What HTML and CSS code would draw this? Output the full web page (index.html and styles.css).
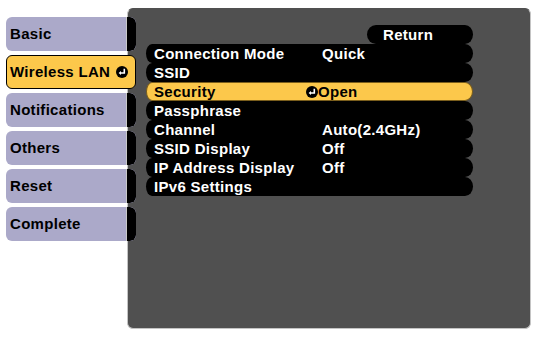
FILE: index.html
```html
<!DOCTYPE html>
<html>
<head>
<meta charset="utf-8">
<link rel="stylesheet" href="styles.css">
</head>
<body>
<div class="screen">
  <div class="sidebar">
    <div class="tab"><span class="tab-label">Basic</span><span class="tab-cap"></span></div>
    <div class="tab tab-active"><span class="tab-label">Wireless LAN</span>
      <svg class="enter-icon" width="12" height="12" viewBox="0 0 12 12"><circle cx="6" cy="6" r="6" fill="#000"/><path d="M8.3 2.8 V7 H4.2" fill="none" stroke="#fff" stroke-width="1.6"/><path d="M2.6 7 L5 5 V9 Z" fill="#fff"/></svg>
    </div>
    <div class="tab"><span class="tab-label">Notifications</span><span class="tab-cap"></span></div>
    <div class="tab"><span class="tab-label">Others</span><span class="tab-cap"></span></div>
    <div class="tab"><span class="tab-label">Reset</span><span class="tab-cap"></span></div>
    <div class="tab"><span class="tab-label">Complete</span><span class="tab-cap"></span></div>
  </div>
  <div class="panel">
    <div class="menu">
      <div class="return-row"><div class="return-btn">Return</div></div>
      <div class="row"><span class="label">Connection Mode</span><span class="value">Quick</span></div>
      <div class="row"><span class="label">SSID</span><span class="value"></span></div>
      <div class="row row-active"><span class="label">Security</span><span class="value value-icon"><svg class="enter-icon" width="12" height="12" viewBox="0 0 12 12"><circle cx="6" cy="6" r="6" fill="#000"/><path d="M8.3 2.8 V7 H4.2" fill="none" stroke="#fff" stroke-width="1.6"/><path d="M2.6 7 L5 5 V9 Z" fill="#fff"/></svg>Open</span></div>
      <div class="row"><span class="label">Passphrase</span><span class="value"></span></div>
      <div class="row"><span class="label">Channel</span><span class="value">Auto(2.4GHz)</span></div>
      <div class="row"><span class="label">SSID Display</span><span class="value">Off</span></div>
      <div class="row"><span class="label">IP Address Display</span><span class="value">Off</span></div>
      <div class="row"><span class="label">IPv6 Settings</span><span class="value"></span></div>
    </div>
  </div>
</div>
</body>
</html>
```
FILE: styles.css
```css
html, body {
  margin: 0;
  padding: 0;
  background: #ffffff;
}
body {
  width: 538px;
  height: 337px;
  overflow: hidden;
  font-family: "Liberation Sans", Arial, sans-serif;
  font-weight: bold;
  font-size: 15px;
  letter-spacing: 0.3px;
}
.screen {
  display: flex;
  align-items: flex-start;
}
.sidebar {
  position: relative;
  z-index: 2;
  margin-left: 6px;
  margin-top: 17px;
  width: 130px;
  display: flex;
  flex-direction: column;
  gap: 4px;
}
.tab {
  height: 34px;
  display: flex;
  align-items: center;
  border-radius: 6px;
  overflow: hidden;
  background: #aba9c9;
  color: #000;
}
.tab-label {
  flex: 1;
  padding-left: 4px;
  line-height: 34px;
}
.tab-cap {
  align-self: stretch;
  width: 9px;
  border-left: 1px solid #c8c8c8;
  background: #000;
  border-radius: 0 6px 6px 0;
}
.tab-active {
  background: #fcc84b;
  border: 1px solid #000;
  height: 32px;
  padding-right: 7px;
}
.tab-active .tab-label {
  padding-left: 3px;
}
.enter-icon {
  display: block;
  flex: none;
}
.panel {
  position: relative;
  z-index: 1;
  margin-left: -9px;
  margin-top: 8px;
  width: 402px;
  height: 319px;
  background: #505050;
  border-radius: 6px;
  border: 1px solid #c4c4c4;
  border-top-color: #505050;
  box-sizing: content-box;
}
.menu {
  padding: 16px 0 0 18px;
  width: 327px;
}
.return-row {
  display: flex;
  justify-content: flex-end;
}
.return-btn {
  width: 106px;
  height: 19px;
  line-height: 19px;
  background: #000;
  color: #fff;
  border-radius: 9px 8px 8px 9px / 9.5px 9.5px 9.5px 9.5px;
  box-sizing: border-box;
  padding-left: 16px;
}
.row {
  height: 19px;
  line-height: 19px;
  background: #000;
  color: #fff;
  display: flex;
  border-radius: 6px 8px 8px 6px / 9.5px 9.5px 9.5px 9.5px;
  box-sizing: border-box;
}
.label {
  width: 168px;
  padding-left: 8px;
  flex: none;
}
.value {
  flex: 1;
  display: flex;
  align-items: center;
}
.row-active {
  background: #fcc84b;
  color: #000;
  border: 1px solid #7a5e1c;
  line-height: 17px;
}
.row-active .label {
  padding-left: 7px;
}
.value-icon {
  margin-left: -16px;
  gap: 0;
}
```
